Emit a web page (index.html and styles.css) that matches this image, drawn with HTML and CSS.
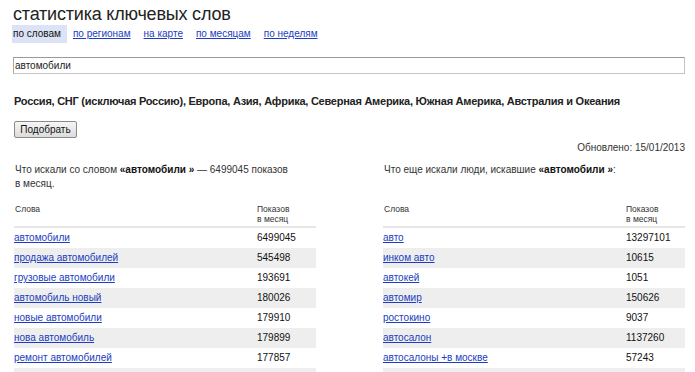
FILE: index.html
```html
<!DOCTYPE html>
<html lang="ru">
<head>
<meta charset="utf-8">
<title>статистика ключевых слов</title>
<link rel="stylesheet" href="styles.css">
</head>
<body>
<div class="page">
  <h1 class="title">статистика ключевых слов</h1>
  <nav class="tabs">
    <span class="tab tab-active">по словам</span>
    <a class="tab" href="#">по регионам</a>
    <a class="tab" href="#">на карте</a>
    <a class="tab" href="#">по месяцам</a>
    <a class="tab" href="#">по неделям</a>
  </nav>
  <div class="query"><input class="query-input" type="text" value="автомобили"></div>
  <div class="regions">Россия, СНГ (исключая Россию), Европа, Азия, Африка, Северная Америка, Южная Америка, Австралия и Океания</div>
  <div class="submit-row"><button class="btn" type="button">Подобрать</button></div>
  <div class="updated">Обновлено: 15/01/2013</div>

  <div class="results">
    <p class="intro intro-left">Что искали со словом <b>«автомобили »</b> — 6499045 показов в месяц.</p>
    <p class="intro">Что еще искали люди, искавшие <b>«автомобили »</b>:</p>

    <table class="stats">
      <thead>
        <tr><th class="c-word">Слова</th><th class="c-num">Показов<br>в месяц</th></tr>
      </thead>
      <tbody>
        <tr><td><a href="#">автомобили</a></td><td>6499045</td></tr>
        <tr class="odd"><td><a href="#">продажа автомобилей</a></td><td>545498</td></tr>
        <tr><td><a href="#">грузовые автомобили</a></td><td>193691</td></tr>
        <tr class="odd"><td><a href="#">автомобиль новый</a></td><td>180026</td></tr>
        <tr><td><a href="#">новые автомобили</a></td><td>179910</td></tr>
        <tr class="odd"><td><a href="#">нова автомобиль</a></td><td>179899</td></tr>
        <tr><td><a href="#">ремонт автомобилей</a></td><td>177857</td></tr>
        <tr class="odd"><td><a href="#">автомобили бу</a></td><td>170412</td></tr>
      </tbody>
    </table>

    <table class="stats">
      <thead>
        <tr><th class="c-word">Слова</th><th class="c-num">Показов<br>в месяц</th></tr>
      </thead>
      <tbody>
        <tr><td><a href="#">авто</a></td><td>13297101</td></tr>
        <tr class="odd"><td><a href="#">инком авто</a></td><td>10615</td></tr>
        <tr><td><a href="#">автокей</a></td><td>1051</td></tr>
        <tr class="odd"><td><a href="#">автомир</a></td><td>150626</td></tr>
        <tr><td><a href="#">ростокино</a></td><td>9037</td></tr>
        <tr class="odd"><td><a href="#">автосалон</a></td><td>1137260</td></tr>
        <tr><td><a href="#">автосалоны +в москве</a></td><td>57243</td></tr>
        <tr class="odd"><td><a href="#">авто ру</a></td><td>4512330</td></tr>
      </tbody>
    </table>
  </div>
</div>
</body>
</html>
```

FILE: styles.css
```css
html, body {
  margin: 0;
  padding: 0;
  background: #fff;
}

body {
  font-family: "Liberation Sans", Arial, sans-serif;
  font-size: 10px;
  color: #222;
}

.page {
  padding: 0 10px 0 14px;
}

.title {
  margin: 3px 0 0 -1px;
  font-size: 18px;
  line-height: 22px;
  letter-spacing: -0.2px;
  font-weight: normal;
  color: #222;
}

.tabs {
  display: flex;
  height: 18px;
  line-height: 18px;
  font-size: 10px;
}

.tab {
  margin-right: 13px;
  color: #1a3dc1;
  text-decoration: underline;
}

.tab-active {
  margin-left: -2px;
  margin-right: 6px;
  padding: 0 6px 0 1px;
  background: #dce3f6;
  color: #111;
  text-decoration: none;
}

.query {
  margin: 14px 0 0 -1px;
}

.query-input {
  display: block;
  box-sizing: border-box;
  width: 100%;
  height: 17px;
  margin: 0;
  padding: 0 1px;
  border: 1px solid #c4c4c4;
  border-top-color: #9a9a9a;
  border-left-color: #a8a8a8;
  font-family: "Liberation Sans", Arial, sans-serif;
  font-size: 10px;
  color: #222;
  outline: none;
}

.regions {
  margin-top: 21px;
  font-size: 11px;
  line-height: 13px;
  letter-spacing: -0.25px;
  font-weight: bold;
  color: #222;
}

.submit-row {
  margin-top: 13px;
}

.btn {
  display: block;
  width: 63px;
  height: 17px;
  padding: 0;
  margin: 0;
  border: 1px solid #8a8a8a;
  border-radius: 2px;
  background: linear-gradient(#f6f6f6, #dcdcdc);
  font-family: "Liberation Sans", Arial, sans-serif;
  font-size: 10px;
  line-height: 14px;
  color: #111;
}

.updated {
  margin-top: 3px;
  line-height: 13px;
  text-align: right;
  color: #333;
}

.results {
  display: grid;
  grid-template-columns: 302px 302px;
  justify-content: space-between;
  margin-top: 9px;
}

.intro {
  margin: 0 0 13px 1px;
  line-height: 14px;
  color: #333;
}

.intro b {
  color: #111;
}

.intro-left {
  width: 280px;
}

.stats {
  width: 302px;
  border-collapse: collapse;
  font-size: 10px;
}

.stats th {
  padding: 0 0 2px 1px;
  border-bottom: 2px solid #e6e6e6;
  font-size: 8.5px;
  line-height: 10px;
  font-weight: normal;
  text-align: left;
  vertical-align: top;
  color: #333;
}

.stats .c-num {
  width: 59px;
  padding-left: 0;
}

.stats td {
  height: 20px;
  padding: 0;
  line-height: 20px;
  color: #111;
  vertical-align: middle;
}

.stats tr.odd td {
  background: #eeeeee;
}

.stats a {
  color: #1a3dc1;
  text-decoration: underline;
}
```
